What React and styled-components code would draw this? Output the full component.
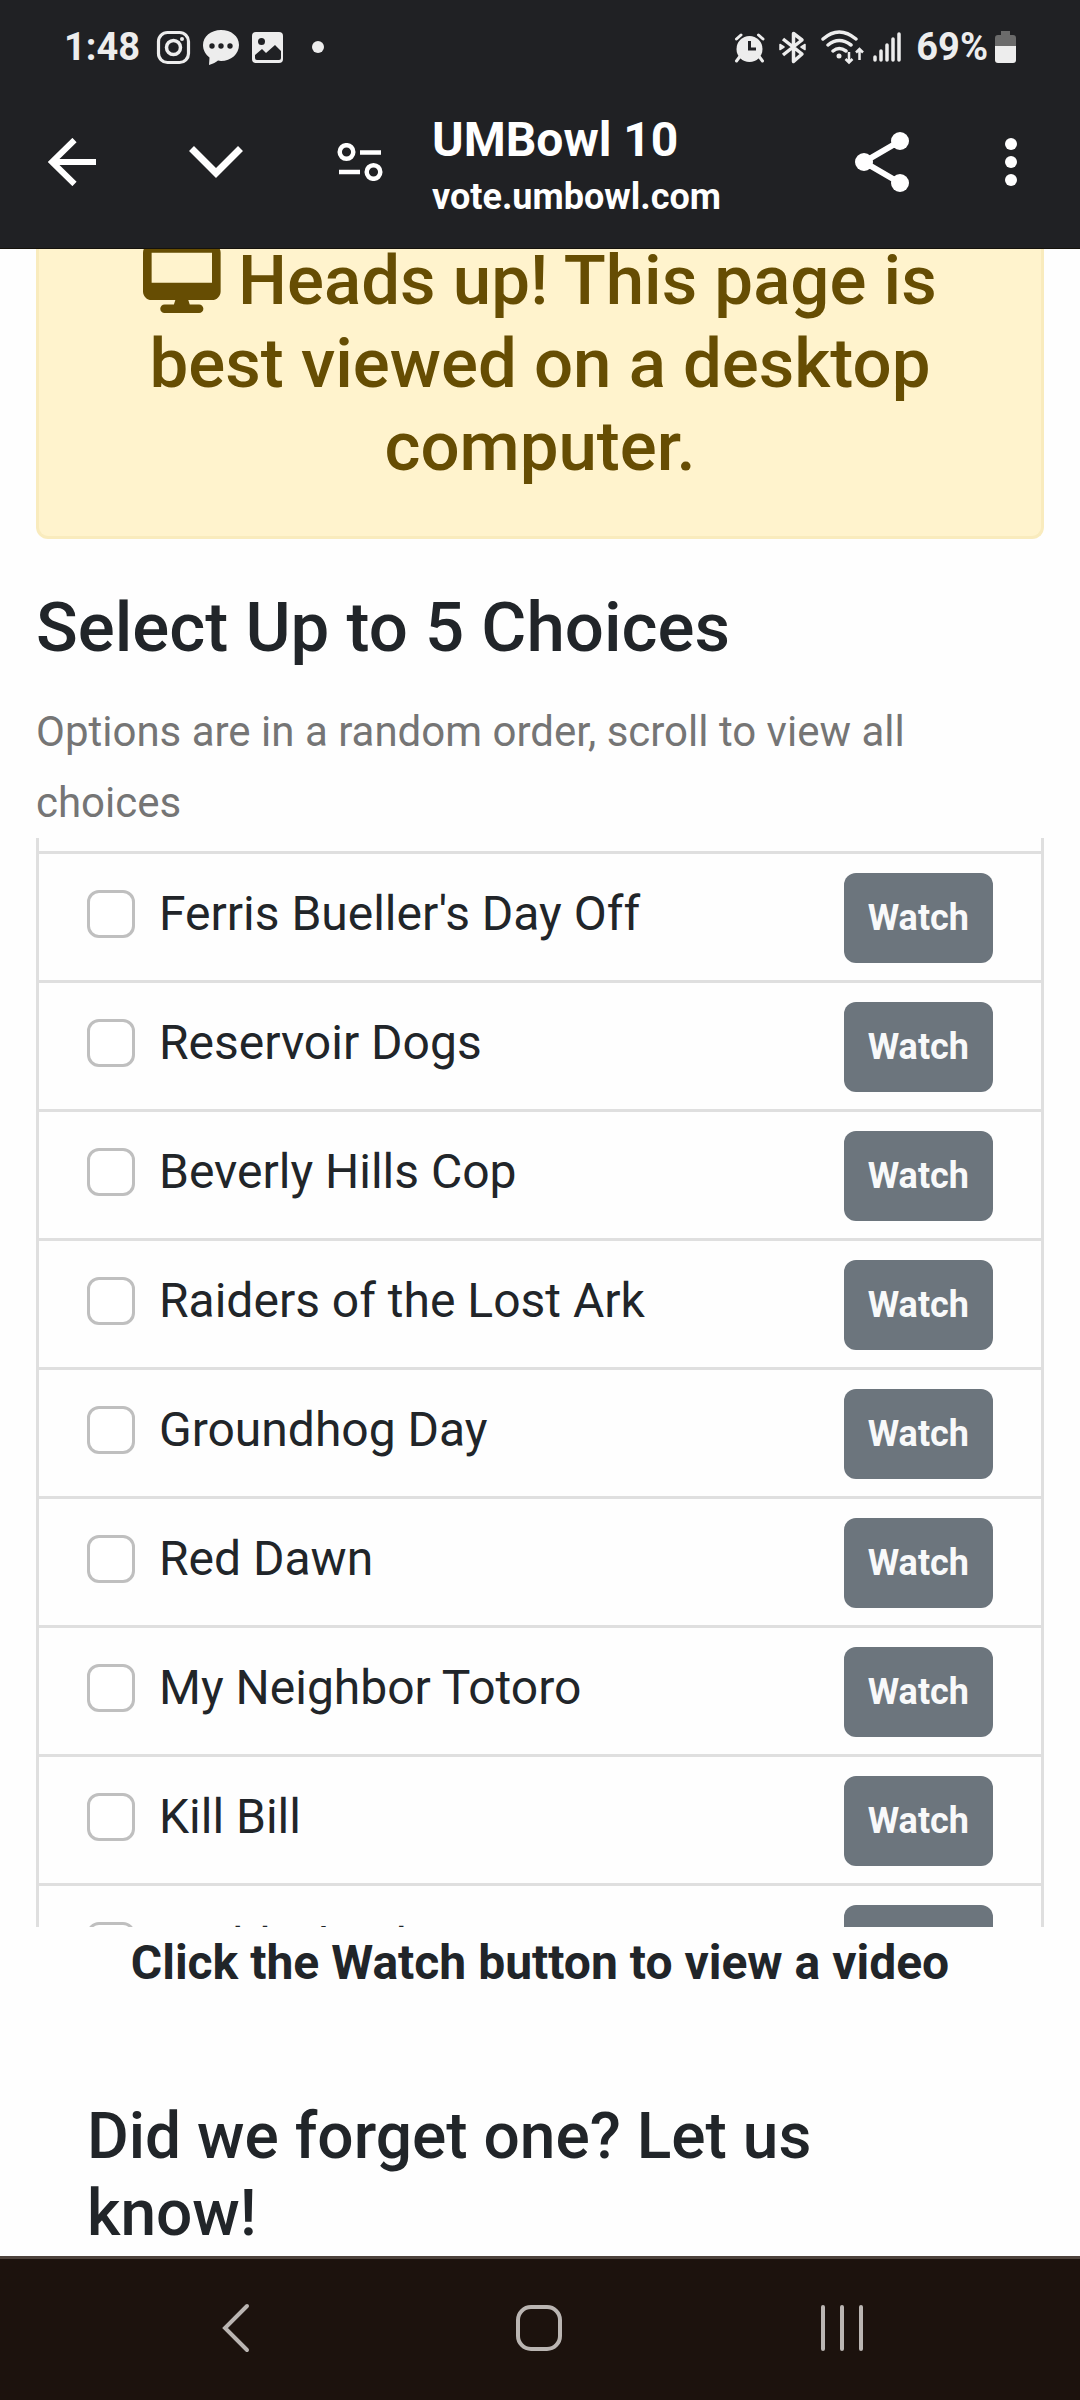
import React from 'react';
//Styling
import styled, { createGlobalStyle } from 'styled-components';

const movies = [
  "Ferris Bueller's Day Off",
  'Reservoir Dogs',
  'Beverly Hills Cop',
  'Raiders of the Lost Ark',
  'Groundhog Day',
  'Red Dawn',
  'My Neighbor Totoro',
  'Kill Bill',
  'Caddyshack',
];

//Status icons
const Instagram = () => (
  <svg width="36" height="36" viewBox="0 0 36 36" fill="none" stroke="currentColor">
    <rect x="2.500" y="3.500" width="30" height="30" rx="9" strokeWidth="3.200" />
    <circle cx="17.500" cy="18.500" r="7" strokeWidth="3.500" />
    <circle cx="26" cy="10" r="2" fill="currentColor" stroke="none" />
  </svg>
);

const Chat = () => (
  <svg width="36" height="36" viewBox="0 0 36 36" fill="currentColor">
    <path d="M18 1C8 1 0 7.500 0 16c0 5 2.500 9.500 6.500 12.500L6 36c4-1 7-3 9-4.500l3 .5c10 0 18-7 18-16S28 1 18 1z" />
    <g fill="#202124">
      <circle cx="9" cy="17" r="2.700" />
      <circle cx="18" cy="17" r="2.700" />
      <circle cx="27" cy="17" r="2.700" />
    </g>
  </svg>
);

const Picture = () => (
  <svg width="36" height="36" viewBox="0 0 36 36">
    <rect x="2" y="3" width="31" height="31" rx="4" fill="currentColor" />
    <circle cx="11.500" cy="12.500" r="3.500" fill="#202124" />
    <path d="M5 26l7-6 4 4 9-8 6 6v7q0 2-2 2H7q-2 0-2-2z" fill="#202124" />
  </svg>
);

const Dot = () => (
  <svg width="36" height="36" viewBox="0 0 36 36" fill="currentColor">
    <circle cx="21" cy="18" r="6" />
  </svg>
);

const Alarm = () => (
  <svg width="36" height="36" viewBox="0 0 36 36" stroke="currentColor" strokeLinecap="round">
    <circle cx="15.500" cy="20" r="13" fill="currentColor" stroke="none" />
    <path d="M2.500 10l4.500-4M24.500 6l4.500 4M5.500 28l-3 4M25.500 28l3 4" strokeWidth="3" />
    <path d="M15.500 12v8h6.500" fill="none" stroke="#202124" strokeWidth="3" strokeLinecap="butt" />
  </svg>
);

const Bluetooth = () => (
  <svg width="36" height="36" viewBox="0 0 36 36" fill="none" stroke="currentColor" strokeWidth="3.500" strokeLinejoin="round">
    <path d="M6 10l19 15-8.500 7.500v-28L25 11 6 26" />
    <path d="M3 15.500l4 2.500-4 2.500zM28 15.500L24 18l4 2.500z" fill="currentColor" strokeWidth="1.500" />
  </svg>
);

const Wifi = () => (
  <svg width="46" height="36" viewBox="0 0 46 36" fill="none" stroke="currentColor" strokeWidth="3.500" strokeLinecap="round">
    <path d="M3 10q16-14 33 0M8 16q11-9 23 0M13 22q6-5 13 0" />
    <circle cx="19" cy="27" r="2.500" fill="currentColor" stroke="none" />
    <path d="M29 23v10M25.500 30l3.500 3.500 3.500-3.500M39.500 31V20M36 23.500l3.500-3.500 3.500 3.500" strokeWidth="2.500" strokeLinecap="butt" />
  </svg>
);

const Signal = () => (
  <svg width="36" height="36" viewBox="0 0 36 36" stroke="currentColor" strokeWidth="3.500" strokeLinecap="round">
    <path d="M2 28v3M8 22v9M14 16v15M20 10v21M26 5v26" />
  </svg>
);

const Battery = () => (
  <svg width="22" height="36" viewBox="0 0 22 36">
    <path d="M6 2h9v4h3q3 0 3 3v8H0V9q0-3 3-3h3z" fill="#6b6b6b" />
    <path d="M0 17h21v14q0 3-3 3H3q-3 0-3-3z" fill="currentColor" />
  </svg>
);

//Toolbar icons
const BackArrow = () => (
  <svg width="48" height="48" viewBox="0 0 48 48" fill="none" stroke="currentColor" strokeWidth="6">
    <path d="M48 24H5M26.500 2L4 24l22.500 22" />
  </svg>
);

const ChevronDown = () => (
  <svg width="54" height="32" viewBox="0 0 54 32" fill="none" stroke="currentColor" strokeWidth="7">
    <path d="M2.500 2.500L27 27 51.500 2.500" />
  </svg>
);

const Tune = () => (
  <svg width="46" height="38" viewBox="0 0 46 38" fill="none" stroke="currentColor" strokeWidth="4.500">
    <circle cx="9.500" cy="9" r="6.800" />
    <circle cx="36.500" cy="29" r="6.800" />
    <path d="M23 9.500h21M2 29h21" />
  </svg>
);

const Share = () => (
  <svg width="54" height="60" viewBox="0 0 54 60" fill="currentColor">
    <path d="M45 9L9 30l36 21" fill="none" stroke="currentColor" strokeWidth="6" />
    <circle cx="45" cy="9" r="9" />
    <circle cx="9" cy="30" r="9" />
    <circle cx="45" cy="51" r="9" />
  </svg>
);

const Dots = () => (
  <svg width="12" height="48" viewBox="0 0 12 48" fill="currentColor">
    <circle cx="6" cy="6" r="6" />
    <circle cx="6" cy="24" r="6" />
    <circle cx="6" cy="42" r="6" />
  </svg>
);

const App = () => {
  return (
    <Screen>
      <GlobalStyle />
      <StatusBar>
        <StatusGroup $gap={11}>
          <Clock>1:48</Clock>
          <Instagram />
          <Chat />
          <Picture />
          <Dot />
        </StatusGroup>
        <StatusGroup $gap={7}>
          <Alarm />
          <Bluetooth />
          <Wifi />
          <Signal />
          <StatusText>69%</StatusText>
          <Battery />
        </StatusGroup>
      </StatusBar>
      <Toolbar>
        <ToolButton aria-label="Back"><BackArrow /></ToolButton>
        <ToolButton aria-label="Minimize"><ChevronDown /></ToolButton>
        <ToolButton aria-label="Site settings"><Tune /></ToolButton>
        <PageInfo>
          <PageTitle>UMBowl 10</PageTitle>
          <PageUrl>vote.umbowl.com</PageUrl>
        </PageInfo>
        <ToolButton aria-label="Share"><Share /></ToolButton>
        <ToolButton aria-label="More" $width={114}><Dots /></ToolButton>
      </Toolbar>
      <Page>
        <Alert role="alert">
          <Desktop viewBox="0 0 576 512">
            <path d="M64 0C28.700 0 0 28.700 0 64V352c0 35.300 28.700 64 64 64H240l-10.700 32H160c-17.700 0-32 14.300-32 32s14.300 32 32 32H416c17.700 0 32-14.300 32-32s-14.300-32-32-32H346.700L336 416H512c35.300 0 64-28.700 64-64V64c0-35.300-28.700-64-64-64H64zM512 64V288H64V64H512z" />
          </Desktop>
          {' '}Heads up! This page is best viewed on a desktop computer.
        </Alert>
        <Heading>Select Up to 5 Choices</Heading>
        <Muted>Options are in a random order, scroll to view all choices</Muted>
        <List>
          {movies.map(movie => (
            <Row key={movie}>
              <Choice>
                <Checkbox type="checkbox" />
                {movie}
              </Choice>
              <Watch type="button">Watch</Watch>
            </Row>
          ))}
        </List>
        <Hint>Click the Watch button to view a video</Hint>
        <Suggest>Did we forget one? Let us know!</Suggest>
      </Page>
      <NavBar>
        <NavButton aria-label="Back">
          <svg width="28" height="50" viewBox="0 0 28 50" fill="none" stroke="currentColor" strokeWidth="4" strokeLinecap="round">
            <path d="M25 3L3 25l22 22" />
          </svg>
        </NavButton>
        <NavButton aria-label="Home">
          <svg width="48" height="48" viewBox="0 0 48 48" fill="none" stroke="currentColor" strokeWidth="4">
            <rect x="3" y="3" width="42" height="42" rx="13" />
          </svg>
        </NavButton>
        <NavButton aria-label="Recents">
          <svg width="44" height="46" viewBox="0 0 44 46" fill="none" stroke="currentColor" strokeWidth="4" strokeLinecap="round">
            <path d="M3 2v42M22 2v42M41 2v42" />
          </svg>
        </NavButton>
      </NavBar>
    </Screen>
  );
};

const GlobalStyle = createGlobalStyle`
  * {
    box-sizing: border-box;
    margin: 0;
    padding: 0;
  }
  body {
    background: #fefefe;
    color: #212529;
    font-family: Roboto, sans-serif;
  }
  button {
    border: none;
    background: none;
    font-family: inherit;
    cursor: pointer;
  }
`;

const Screen = styled.div`
  height: 100vh;
  display: flex;
  flex-direction: column;
`;

const StatusBar = styled.header`
  display: flex;
  justify-content: space-between;
  padding: 18px 63px 0 64px;
  background: #202124;
  color: #ededed;
`;

const StatusGroup = styled.div`
  height: 58px;
  display: flex;
  align-items: center;
  gap: ${({ $gap }) => $gap}px;
`;

const StatusText = styled.span`
  font-size: 38px;
  font-weight: 700;
`;

const Clock = styled(StatusText)`
  min-width: 81px;
`;

const Toolbar = styled.nav`
  height: 173px;
  flex-shrink: 0;
  display: flex;
  align-items: center;
  padding-right: 12px;
  background: #202124;
  border-bottom: 1px solid #15120c;
  color: white;
`;

const ToolButton = styled.button`
  width: ${({ $width }) => $width || 144}px;
  height: 144px;
  display: flex;
  align-items: center;
  justify-content: center;
  color: white;
`;

const PageInfo = styled.div`
  flex: 1;
  padding-top: 9px;
`;

const PageTitle = styled.h1`
  font-size: 48px;
  font-weight: 700;
  line-height: 60px;
`;

const PageUrl = styled.p`
  font-size: 36px;
  font-weight: 700;
  line-height: 54px;
`;

const Page = styled.main`
  flex: 1;
  min-height: 0;
  overflow: hidden;
  padding: 0 36px;
`;

const Alert = styled.div`
  margin: -10px 0 47px;
  padding: 0 48px 48px;
  border: 3px solid #f9ebbd;
  border-top: none;
  border-radius: 0 0 12px 12px;
  background: #fff3cd;
  color: #664d03;
  font-size: 69px;
  font-weight: 500;
  line-height: 83px;
  text-align: center;
`;

const Desktop = styled.svg`
  height: 1em;
  vertical-align: -.125em;
  fill: currentColor;
`;

const Heading = styled.h2`
  margin-bottom: 27px;
  font-size: 69px;
  font-weight: 500;
  line-height: 83px;
`;

const Muted = styled.p`
  color: #757575;
  font-size: 42px;
  line-height: 71px;
`;

const List = styled.ul`
  height: 1089px;
  overflow-y: auto;
  padding-top: 13px;
  border: solid #dfdfdf;
  border-width: 0 3px;
  list-style: none;
  scrollbar-width: none;
`;

const Row = styled.li`
  display: flex;
  align-items: center;
  justify-content: space-between;
  padding: 19px 48px 17px;
  border-top: 3px solid #dfdfdf;
`;

const Choice = styled.label`
  display: flex;
  align-items: center;
  gap: 24px;
  padding-bottom: 8px;
  font-size: 48px;
  line-height: 72px;
`;

const Checkbox = styled.input`
  appearance: none;
  width: 48px;
  height: 48px;
  border: 3px solid #bfbfbf;
  border-radius: 12px;
  background: white;
  &:checked {
    background: #0d6efd;
  }
`;

const Watch = styled.button`
  height: 90px;
  padding: 0 24px;
  border-radius: 12px;
  background: #6c757d;
  color: #f8f9fa;
  font-size: 36px;
  font-weight: 700;
`;

const Hint = styled.p`
  font-size: 48px;
  font-weight: 700;
  line-height: 72px;
  text-align: center;
`;

const Suggest = styled.h3`
  margin-top: 99px;
  padding: 0 51px;
  font-size: 64px;
  font-weight: 500;
  line-height: 77px;
`;

const NavBar = styled.footer`
  height: 144px;
  flex-shrink: 0;
  display: flex;
  padding: 0 87px 3px 85px;
  background: #1c120d;
  border-top: 3px solid #4d423c;
`;

const NavButton = styled.button`
  flex: 1;
  display: flex;
  align-items: center;
  justify-content: center;
  color: #bab5b2;
`;

export default App;
